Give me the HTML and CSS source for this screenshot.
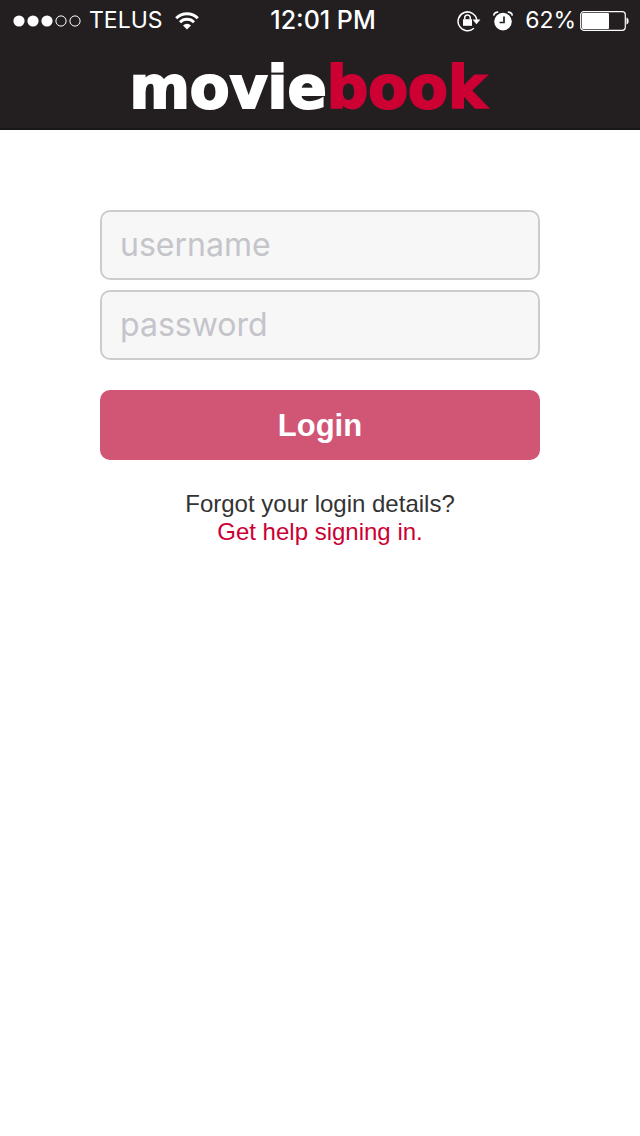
FILE: index.html
```html
<!DOCTYPE html>
<html lang="en">
<head>
<meta charset="utf-8">
<meta name="viewport" content="width=device-width, initial-scale=1">
<title>moviebook</title>
<link rel="stylesheet" href="styles.css">
</head>
<body>
<header class="header">
  <div class="status">
    <div class="status-left">
      <svg class="signal" width="68" height="12" viewBox="0 0 68 12" aria-hidden="true">
        <g fill="#fff"><circle cx="6" cy="6" r="5.6"/><circle cx="20" cy="6" r="5.6"/><circle cx="34" cy="6" r="5.6"/></g>
        <g fill="none" stroke="#fff"><circle cx="48" cy="6" r="5.1"/><circle cx="62" cy="6" r="5.1"/></g>
      </svg>
      <span class="carrier">TELUS</span>
      <svg class="wifi" width="24" height="18" viewBox="0 0 24 18" aria-hidden="true">
        <g fill="none" stroke="#fff" stroke-width="3">
          <path d="M1.2 6.2a15.3 15.3 0 0 1 21.6 0"/>
          <path d="M5 10.2a9.9 9.9 0 0 1 14 0"/>
        </g>
        <path fill="#fff" d="M8 13.4a5.7 5.7 0 0 1 8 0L12 17.5z"/>
      </svg>
    </div>
    <time class="clock">12:01 PM</time>
    <div class="status-right">
      <svg width="24" height="22" viewBox="0 0 24 22" aria-hidden="true">
        <path d="M16.9 18.2A9.4 9.4 0 1 1 19.8 10" fill="none" stroke="#fff" stroke-width="1.5"/>
        <path d="M15.6 9.6h7.8l-3.9 4.6z" fill="#fff"/>
        <path d="M6 9.2h9v6.6H6z" fill="#fff"/>
        <path d="M7.7 9.5V7.7a2.8 2.8 0 0 1 5.6 0v1.8" fill="none" stroke="#fff" stroke-width="1.5"/>
      </svg>
      <svg width="20" height="20" viewBox="0 0 20 20" aria-hidden="true">
        <circle cx="10" cy="10.6" r="8.8" fill="#fff"/>
        <path d="M11 5.6v5.9H6.6" fill="none" stroke="#231f20" stroke-width="1.7"/>
        <path d="M.7 4.6C1 2.4 2.7 1 5.2 1.1M19.3 4.6c-.3-2.2-2-3.6-4.5-3.5" fill="none" stroke="#fff" stroke-width="1.6"/>
      </svg>
      <span class="charge">62%</span>
      <svg class="battery" width="50" height="20" viewBox="0 0 50 20" aria-hidden="true">
        <rect x=".7" y=".7" width="44.6" height="18.6" rx="3" fill="none" stroke="#fff" stroke-width="1.2"/>
        <rect x="2" y="2" width="27" height="16" rx="1" fill="#fff"/>
        <path d="M46.5 6.5c2.8.6 2.8 6.4 0 7z" fill="#fff"/>
      </svg>
    </div>
  </div>
  <h1 class="logo">movie<span class="logo-accent">book</span></h1>
</header>
<main class="main">
  <form class="login">
    <input class="field" type="text" placeholder="username" aria-label="username">
    <input class="field" type="password" placeholder="password" aria-label="password">
    <button class="submit" type="submit">Login</button>
  </form>
  <p class="help">Forgot your login details?<br><a class="help-link" href="#">Get help signing in.</a></p>
</main>
</body>
</html>
```
FILE: styles.css
```css
* {
  box-sizing: border-box;
}

body {
  margin: 0;
  background: #fff;
  color: #333;
  font-family: "Liberation Sans", Arial, sans-serif;
}

.header {
  background: #231f20;
  border-bottom: 2px solid #1a1718;
  color: #fff;
}

.status {
  display: grid;
  grid-template-columns: 1fr auto 1fr;
  align-items: center;
  height: 41px;
  padding: 0 10px 0 13px;
  font: 23px/41px Inter, sans-serif;
}

.status-left,
.status-right {
  display: flex;
  align-items: center;
}

.status-left {
  gap: 8px;
}

.status-right {
  justify-content: flex-end;
  gap: 12px;
}

.wifi {
  margin-left: 4px;
}

.clock {
  padding-left: 3px;
  font-size: 25px;
  font-weight: 500;
}

.battery {
  margin-left: -8px;
}

.logo {
  margin: 0;
  padding: 8px 24px 0 0;
  font: 700 58px/79px "DejaVu Sans", sans-serif;
  text-align: center;
  -webkit-text-stroke: 2px;
}

.logo-accent {
  color: #cc0033;
}

.main {
  max-width: 480px;
  margin: 0 auto;
  padding: 80px 20px;
}

.login {
  display: flex;
  flex-direction: column;
  gap: 10px;
}

.field {
  width: 100%;
  height: 70px;
  padding: 0 18px 2px;
  border: 2px solid #ccc;
  border-radius: 10px;
  background: #f7f7f7;
  color: #333;
  font: 32px Inter, sans-serif;
}

.field::placeholder {
  color: #c4c4ca;
  opacity: 1;
}

.submit {
  height: 70px;
  margin-top: 20px;
  padding: 2px 0 0;
  border: 0;
  border-radius: 10px;
  background: #d15676;
  color: #fff;
  font: 700 31px "Liberation Sans", Arial, sans-serif;
}

.help {
  margin: 30px 0 0;
  font-size: 24px;
  line-height: 28px;
  text-align: center;
}

.help-link {
  color: #cc0033;
  text-decoration: none;
}
```
